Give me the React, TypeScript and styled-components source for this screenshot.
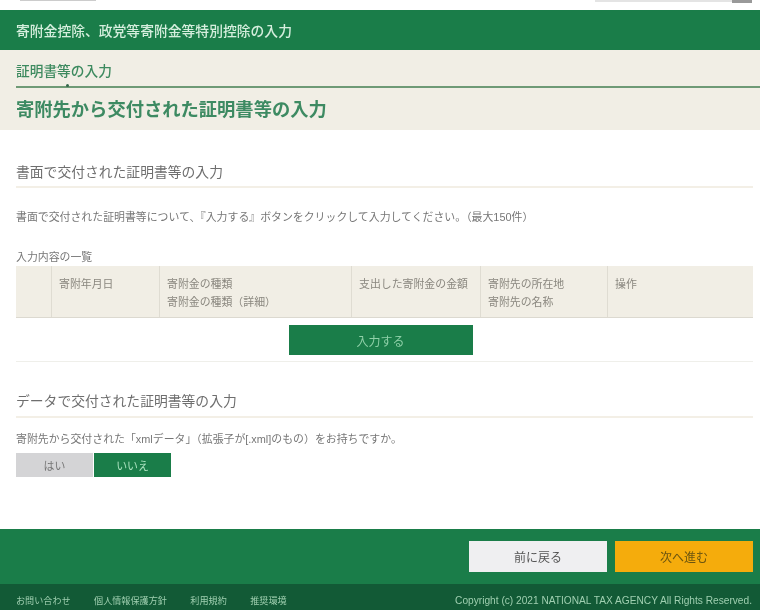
import { FunctionComponent } from 'react'
import styled, { createGlobalStyle } from 'styled-components'

const GlobalStyle = createGlobalStyle`
  html, body {
    margin: 0;
    padding: 0;
    background: #fff;
  }
  body {
    font-family: 'Liberation Sans', 'Noto Sans CJK JP', sans-serif;
    color: #555;
    overflow: hidden;
  }
`

const columns = [
  { width: 36, lines: [] as string[] },
  { width: 108, lines: ['寄附年月日'] },
  { width: 192, lines: ['寄附金の種類', '寄附金の種類（詳細）'] },
  { width: 129, lines: ['支出した寄附金の金額'] },
  { width: 127, lines: ['寄附先の所在地', '寄附先の名称'] },
  { width: 145, lines: ['操作'] },
]

const footerLinks = ['お問い合わせ', '個人情報保護方針', '利用規約', '推奨環境']

const App: FunctionComponent = () => {
  return (
    <Page>
      <GlobalStyle />
      <TopStrip>
        <TopLogo />
        <TopSearch>
          <TopSearchButton />
        </TopSearch>
      </TopStrip>
      <AppBar>寄附金控除、政党等寄附金等特別控除の入力</AppBar>
      <StepArea>
        <StepLabel>証明書等の入力</StepLabel>
        <StepRule>
          <StepDot />
        </StepRule>
        <PageTitle>寄附先から交付された証明書等の入力</PageTitle>
      </StepArea>
      <Main>
        <SectionHeading>書面で交付された証明書等の入力</SectionHeading>
        <Lead>書面で交付された証明書等について、『入力する』ボタンをクリックして入力してください。（最大150件）</Lead>
        <Caption>入力内容の一覧</Caption>
        <HeaderRow>
          {columns.map((col, i) => (
            <HeaderCell key={i} $width={col.width}>
              {col.lines.map((line) => (
                <div key={line}>{line}</div>
              ))}
            </HeaderCell>
          ))}
        </HeaderRow>
        <AddRow>
          <AddButton type='button'>入力する</AddButton>
        </AddRow>
        <SectionHeading $second>データで交付された証明書等の入力</SectionHeading>
        <Question>寄附先から交付された「xmlデータ」（拡張子が[.xml]のもの）をお持ちですか。</Question>
        <Choices>
          <Choice type='button'>はい</Choice>
          <Choice type='button' $active>
            いいえ
          </Choice>
        </Choices>
      </Main>
      <ActionBar>
        <ActionButton type='button'>前に戻る</ActionButton>
        <ActionButton type='button' $primary>
          次へ進む
        </ActionButton>
      </ActionBar>
      <Footer>
        <FooterLinks>
          {footerLinks.map((link) => (
            <span key={link}>{link}</span>
          ))}
        </FooterLinks>
        <Copyright>Copyright (c) 2021 NATIONAL TAX AGENCY All Rights Reserved.</Copyright>
      </Footer>
    </Page>
  )
}

export default App

const Page = styled.div`
  width: 760px;
  height: 610px;
  display: flex;
  flex-direction: column;
  overflow: hidden;
  filter: blur(0.6px);
`

const TopStrip = styled.div`
  height: 10px;
  flex: none;
  display: flex;
  justify-content: space-between;
  padding: 0 8px 0 20px;
  box-sizing: border-box;
`

const TopLogo = styled.div`
  width: 76px;
  height: 1px;
  background: #ccc;
`

const TopSearch = styled.div`
  width: 157px;
  height: 2px;
  background: #e4e4e4;
  display: flex;
  justify-content: flex-end;
`

const TopSearchButton = styled.div`
  width: 20px;
  height: 3px;
  background: #999;
`

const AppBar = styled.div`
  height: 40px;
  flex: none;
  display: flex;
  align-items: center;
  padding: 0 16px;
  background: #1a7d49;
  color: #d5eedd;
  font-size: 13.8px;
  font-weight: 500;
`

const StepArea = styled.div`
  height: 80px;
  flex: none;
  padding: 13px 0 0 16px;
  box-sizing: border-box;
  background: #f1eee5;
`

const StepLabel = styled.div`
  height: 17px;
  line-height: 17px;
  font-size: 13.7px;
  font-weight: 500;
  color: #3d8a5f;
`

const StepRule = styled.div`
  position: relative;
  height: 2px;
  margin-top: 6px;
  background: #6f9a76;
`

const StepDot = styled.span`
  position: absolute;
  left: 50px;
  top: -2px;
  width: 3px;
  height: 3px;
  border-radius: 50%;
  background: #33664a;
`

const PageTitle = styled.h1`
  margin: 10px 0 0;
  font-size: 18.3px;
  line-height: 24px;
  font-weight: 700;
  color: #3d8a62;
`

const Main = styled.main`
  flex: 1;
  padding: 0 7px 0 16px;
`

const SectionHeading = styled.h2<{ $second?: boolean }>`
  margin: ${(props) => (props.$second ? '0' : '30px 0 0')};
  padding-bottom: 5px;
  line-height: ${(props) => (props.$second ? '24px' : '26px')};
  height: 21px;
  font-size: 13.8px;
  font-weight: 400;
  color: #6e6e6e;
  border-bottom: 2px solid #f3efe6;
  ${(props) => props.$second && 'padding-top: 28px;'}
`

const Lead = styled.p`
  margin: 20px 0 0;
  font-size: 10.9px;
  line-height: 18px;
  color: #777;
`

const Caption = styled.div`
  margin-top: 22px;
  height: 18px;
  line-height: 18px;
  font-size: 10.9px;
  color: #777;
`

const HeaderRow = styled.div`
  display: flex;
  height: 52px;
  background: #f1eee5;
  border-bottom: 1px solid #dcd9d0;
  box-sizing: border-box;
`

const HeaderCell = styled.div<{ $width: number }>`
  width: ${(props) => props.$width}px;
  padding: 9px 0 0 7px;
  box-sizing: border-box;
  font-size: 10.9px;
  line-height: 18px;
  color: #8a877f;
  border-right: 1px solid #dfdcd2;
  &:last-child {
    border-right: none;
  }
`

const AddRow = styled.div`
  display: flex;
  justify-content: center;
  padding: 7px 8px 6px 0;
  border-bottom: 1px solid #efefea;
`

const AddButton = styled.button`
  width: 184px;
  height: 30px;
  border: none;
  padding: 0;
  background: #1a7d49;
  color: #8fd0a8;
  font-family: inherit;
  font-size: 12px;
`

const Question = styled.p`
  margin: 12px 0 0;
  font-size: 10.9px;
  line-height: 18px;
  color: #777;
`

const Choices = styled.div`
  display: flex;
  gap: 1px;
  margin-top: 5px;
`

const Choice = styled.button<{ $active?: boolean }>`
  width: 77px;
  height: 24px;
  border: none;
  padding: 0;
  background: ${(props) => (props.$active ? '#1a7d49' : '#d4d4d6')};
  color: ${(props) => (props.$active ? '#a8e0bd' : '#777')};
  font-family: inherit;
  font-size: 10.9px;
`

const ActionBar = styled.div`
  height: 55px;
  flex: none;
  display: flex;
  justify-content: flex-end;
  gap: 8px;
  padding: 12px 7px 0 0;
  box-sizing: border-box;
  background: #1a7d49;
`

const ActionButton = styled.button<{ $primary?: boolean }>`
  width: 138px;
  height: 31px;
  border: none;
  padding: 0;
  background: ${(props) => (props.$primary ? '#f5ac0c' : '#efeff1')};
  color: ${(props) => (props.$primary ? '#6b5510' : '#555')};
  font-family: inherit;
  font-size: 12px;
`

const Footer = styled.footer`
  height: 26px;
  flex: none;
  display: flex;
  align-items: center;
  justify-content: space-between;
  padding: 6px 8px 0 16px;
  box-sizing: border-box;
  background: #125a36;
  color: #9fcfb0;
  font-size: 9.1px;
`

const FooterLinks = styled.div`
  display: flex;
  gap: 23.5px;
`

const Copyright = styled.div`
  font-size: 10.17px;
  white-space: nowrap;
`
